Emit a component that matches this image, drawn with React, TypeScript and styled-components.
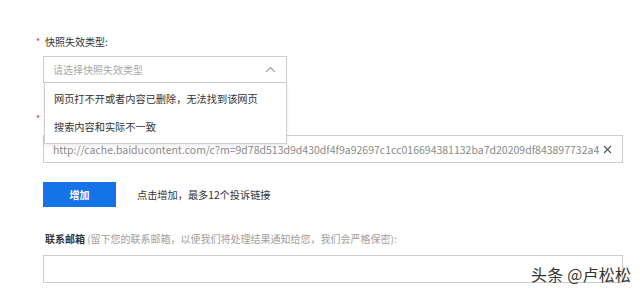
import React from "react";
import styled, { createGlobalStyle } from "styled-components";

const Global = createGlobalStyle`
  html, body { margin: 0; padding: 0; background: #fff; }
  body { font-family: "Noto Sans CJK SC", "Microsoft YaHei", sans-serif; color: #333; }
  * { box-sizing: border-box; }
`;

const Page = styled.div`
  position: relative;
  width: 640px;
  height: 294px;
  overflow: hidden;
  padding: 35px 17px 0 43px;
`;

const Field = styled.div<{ $mt?: number }>`
  display: flex;
  flex-direction: column;
  margin-top: ${(p) => p.$mt ?? 0}px;
`;

const Label = styled.div`
  position: relative;
  height: 14px;
  line-height: 14px;
  font-size: 10px;
  color: #333;
  padding-left: 2px;
`;

const Star = styled.span`
  position: absolute;
  left: -7px;
  top: 0;
  color: #e4393c;
  font-size: 9px;
`;

const Hint = styled.span`
  color: #a0a0a0;
  font-weight: 400;
`;

const Strong = styled.span`
  font-weight: 700;
  color: #333;
`;

const SelectWrap = styled.div`
  position: relative;
  width: 244px;
  margin-top: 7px;
`;

const SelectBox = styled.div`
  height: 27px;
  border: 1px solid #cdcdcd;
  display: flex;
  align-items: center;
  justify-content: space-between;
  padding: 0 10px 0 9px;
  font-size: 10px;
  color: #a8a8a8;
`;

const Menu = styled.ul`
  position: absolute;
  left: 1px;
  right: 0;
  top: 27px;
  margin: 0;
  padding: 2px 0;
  list-style: none;
  background: #fff;
  border: 1px solid #cfcfcf;
  border-top: none;
  box-shadow: 0 2px 4px rgba(0, 0, 0, 0.08);
  z-index: 5;
`;

const Option = styled.li`
  height: 28px;
  line-height: 28px;
  padding-left: 9px;
  font-size: 10.2px;
  color: #333;
  white-space: nowrap;
`;

const Input = styled.div<{ $h: number }>`
  height: ${(p) => p.$h}px;
  margin-top: 9px;
  border: 1px solid #cdcdcd;
  display: flex;
  align-items: center;
  justify-content: space-between;
  padding: 0 10px 0 9px;
  font-size: 10.5px;
  color: #8a8a8a;
  white-space: nowrap;
  overflow: hidden;
`;

const Row = styled.div`
  display: flex;
  align-items: center;
  gap: 21px;
  margin-top: 19px;
`;

const Button = styled.button`
  width: 73px;
  height: 25px;
  border: none;
  background: #1473e6;
  color: #fff;
  font-family: inherit;
  font-size: 10px;
  font-weight: 700;
  padding: 0;
`;

const Note = styled.span`
  font-size: 10.2px;
  color: #333;
`;

const Watermark = styled.div`
  position: absolute;
  left: 531px;
  top: 263px;
  font-size: 16px;
  line-height: 22px;
  color: #333;
  letter-spacing: 0.2px;
  white-space: nowrap;
`;

export default function App() {
  return (
    <>
      <Global />
      <Page>
        <Field>
          <Label>
            <Star>*</Star>快照失效类型:
          </Label>
          <SelectWrap>
            <SelectBox>
              <span>请选择快照失效类型</span>
              <svg width="11" height="7" viewBox="0 0 11 7">
                <path d="M1 6 L5.5 1.5 L10 6" fill="none" stroke="#a0a0a0" strokeWidth="1.1" />
              </svg>
            </SelectBox>
            <Menu>
              <Option>网页打不开或者内容已删除，无法找到该网页</Option>
              <Option>搜索内容和实际不一致</Option>
            </Menu>
          </SelectWrap>
        </Field>
        <Field $mt={29}>
          <Label>
            <Star>*</Star>
          </Label>
          <Input $h={28}>
            <span>http://cache.baiducontent.com/c?m=9d78d513d9d430df4f9a92697c1cc016694381132ba7d20209df843897732a4</span>
            <svg width="9" height="9" viewBox="0 0 9 9">
              <path d="M1 1 L8 8 M8 1 L1 8" stroke="#555" strokeWidth="1.1" />
            </svg>
          </Input>
        </Field>
        <Row>
          <Button>增加</Button>
          <Note>点击增加，最多12个投诉链接</Note>
        </Row>
        <Field $mt={25}>
          <Label>
            <Strong>联系邮箱</Strong>
            <Hint> (留下您的联系邮箱，以便我们将处理结果通知给您，我们会严格保密):</Hint>
          </Label>
          <Input $h={28} />
        </Field>
        <Watermark>头条 @卢松松</Watermark>
      </Page>
    </>
  );
}
